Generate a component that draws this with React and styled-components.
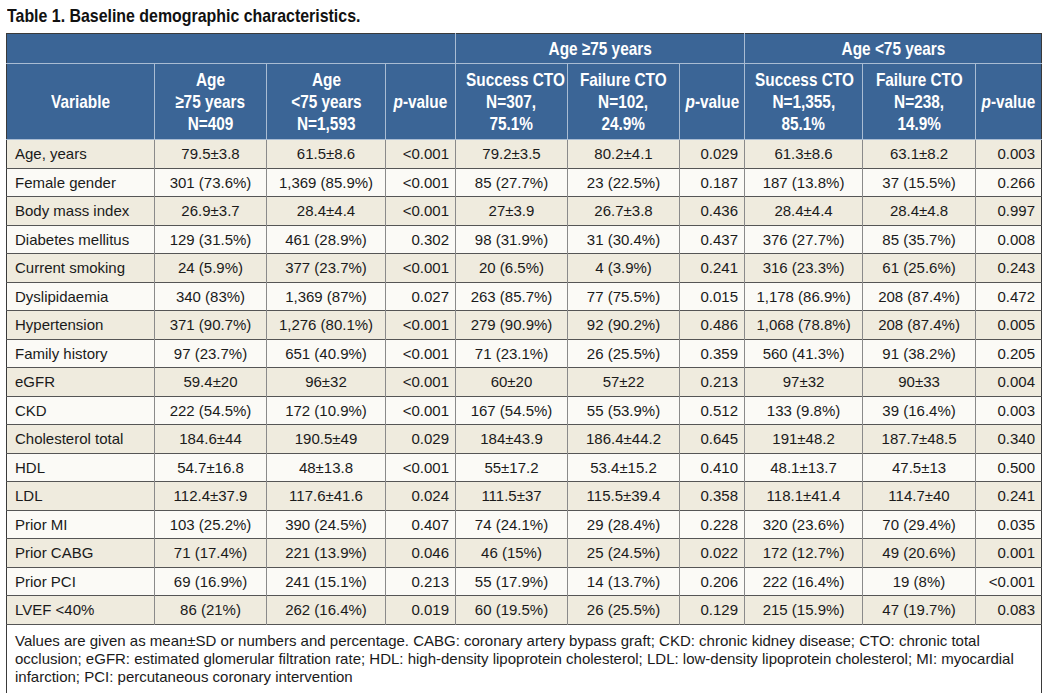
import React from "react";
import styled, { createGlobalStyle } from "styled-components";

const Global = createGlobalStyle`
  html, body { margin: 0; padding: 0; background: #ffffff; }
  body { font-family: "Liberation Sans", Arial, sans-serif; }
`;

const Page = styled.div`
  padding: 5px 0 0 6px;
  width: 1035px;
`;

const Title = styled.h1`
  margin: 0 0 6px 1px;
  font-family: "Liberation Sans", Arial, sans-serif;
  font-weight: 700;
  font-size: 18.5px;
  line-height: 22px;
  color: #111;
  white-space: nowrap;
`;

const Narrow = styled.span`
  display: inline-block;
  white-space: nowrap;
  transform: scaleX(${(p) => p.$s || 0.85});
  transform-origin: ${(p) => (p.$left ? "left center" : "center center")};
`;

const Table = styled.table`
  border-collapse: collapse;
  table-layout: fixed;
  width: 1035px;
  border: 1px solid #3a3a3a;
`;

const HeadCell = styled.th`
  background: #3b6596;
  color: #ffffff;
  font-family: "Liberation Sans", Arial, sans-serif;
  font-weight: 700;
  font-size: 18.5px;
  line-height: 22px;
  text-align: center;
  padding: 0;
  overflow: visible;
  border-left: 1px solid #a9bcd3;
  border-bottom: 1px solid #a9bcd3;
  &:first-child { border-left: none; }
  height: ${(p) => p.$h}px;
  em { font-style: italic; }
`;

const Row = styled.tr`
  background: ${(p) => (p.$alt ? "#fbfaf6" : "#efebde")};
  height: 28.5px;
`;

const Cell = styled.td`
  font-size: 15px;
  color: #1a1a1a;
  padding: 0 ${(p) => (p.$align === "right" ? "6px" : "2px")} 0 ${(p) => (p.$align === "left" ? "8px" : "2px")};
  text-align: ${(p) => p.$align || "center"};
  white-space: nowrap;
  border-top: 1px solid #555;
  border-left: 1px solid #8a8a8a;
  &:first-child { border-left: none; }
`;

const Foot = styled.td`
  background: #ffffff;
  font-size: 15px;
  line-height: 18px;
  color: #1a1a1a;
  padding: 7px 8px 8px 8px;
  border-top: 1px solid #555;
`;

const widths = [148, 112, 119, 70, 112, 112, 65, 118, 113, 66];

const rows = [
  ["Age, years", "79.5±3.8", "61.5±8.6", "<0.001", "79.2±3.5", "80.2±4.1", "0.029", "61.3±8.6", "63.1±8.2", "0.003"],
  ["Female gender", "301 (73.6%)", "1,369 (85.9%)", "<0.001", "85 (27.7%)", "23 (22.5%)", "0.187", "187 (13.8%)", "37 (15.5%)", "0.266"],
  ["Body mass index", "26.9±3.7", "28.4±4.4", "<0.001", "27±3.9", "26.7±3.8", "0.436", "28.4±4.4", "28.4±4.8", "0.997"],
  ["Diabetes mellitus", "129 (31.5%)", "461 (28.9%)", "0.302", "98 (31.9%)", "31 (30.4%)", "0.437", "376 (27.7%)", "85 (35.7%)", "0.008"],
  ["Current smoking", "24 (5.9%)", "377 (23.7%)", "<0.001", "20 (6.5%)", "4 (3.9%)", "0.241", "316 (23.3%)", "61 (25.6%)", "0.243"],
  ["Dyslipidaemia", "340 (83%)", "1,369 (87%)", "0.027", "263 (85.7%)", "77 (75.5%)", "0.015", "1,178 (86.9%)", "208 (87.4%)", "0.472"],
  ["Hypertension", "371 (90.7%)", "1,276 (80.1%)", "<0.001", "279 (90.9%)", "92 (90.2%)", "0.486", "1,068 (78.8%)", "208 (87.4%)", "0.005"],
  ["Family history", "97 (23.7%)", "651 (40.9%)", "<0.001", "71 (23.1%)", "26 (25.5%)", "0.359", "560 (41.3%)", "91 (38.2%)", "0.205"],
  ["eGFR", "59.4±20", "96±32", "<0.001", "60±20", "57±22", "0.213", "97±32", "90±33", "0.004"],
  ["CKD", "222 (54.5%)", "172 (10.9%)", "<0.001", "167 (54.5%)", "55 (53.9%)", "0.512", "133 (9.8%)", "39 (16.4%)", "0.003"],
  ["Cholesterol total", "184.6±44", "190.5±49", "0.029", "184±43.9", "186.4±44.2", "0.645", "191±48.2", "187.7±48.5", "0.340"],
  ["HDL", "54.7±16.8", "48±13.8", "<0.001", "55±17.2", "53.4±15.2", "0.410", "48.1±13.7", "47.5±13", "0.500"],
  ["LDL", "112.4±37.9", "117.6±41.6", "0.024", "111.5±37", "115.5±39.4", "0.358", "118.1±41.4", "114.7±40", "0.241"],
  ["Prior MI", "103 (25.2%)", "390 (24.5%)", "0.407", "74 (24.1%)", "29 (28.4%)", "0.228", "320 (23.6%)", "70 (29.4%)", "0.035"],
  ["Prior CABG", "71 (17.4%)", "221 (13.9%)", "0.046", "46 (15%)", "25 (24.5%)", "0.022", "172 (12.7%)", "49 (20.6%)", "0.001"],
  ["Prior PCI", "69 (16.9%)", "241 (15.1%)", "0.213", "55 (17.9%)", "14 (13.7%)", "0.206", "222 (16.4%)", "19 (8%)", "<0.001"],
  ["LVEF <40%", "86 (21%)", "262 (16.4%)", "0.019", "60 (19.5%)", "26 (25.5%)", "0.129", "215 (15.9%)", "47 (19.7%)", "0.083"],
];

const pCols = new Set([3, 6, 9]);

const H = ({ lines }) => (
  <>
    {lines.map((l, i) => (
      <React.Fragment key={i}>
        {i > 0 && <br />}
        <Narrow $s={0.83}>{l}</Narrow>
      </React.Fragment>
    ))}
  </>
);

const PVal = () => (
  <Narrow $s={0.83}>
    <em>p</em>-value
  </Narrow>
);

export default function App() {
  return (
    <Page>
      <Global />
      <Title>
        <Narrow $left $s={0.86}>Table 1. Baseline demographic characteristics.</Narrow>
      </Title>
      <Table>
        <colgroup>
          {widths.map((w, i) => (
            <col key={i} style={{ width: w }} />
          ))}
        </colgroup>
        <thead>
          <tr>
            <HeadCell colSpan={4} $h={29} />
            <HeadCell colSpan={3} $h={29}><H lines={["Age ≥75 years"]} /></HeadCell>
            <HeadCell colSpan={3} $h={29}><H lines={["Age <75 years"]} /></HeadCell>
          </tr>
          <tr>
            <HeadCell $h={75}><H lines={["Variable"]} /></HeadCell>
            <HeadCell $h={75}><H lines={["Age", "≥75 years", "N=409"]} /></HeadCell>
            <HeadCell $h={75}><H lines={["Age", "<75 years", "N=1,593"]} /></HeadCell>
            <HeadCell $h={75}><PVal /></HeadCell>
            <HeadCell $h={75}><H lines={["Success CTO", "N=307,", "75.1%"]} /></HeadCell>
            <HeadCell $h={75}><H lines={["Failure CTO", "N=102,", "24.9%"]} /></HeadCell>
            <HeadCell $h={75}><PVal /></HeadCell>
            <HeadCell $h={75}><H lines={["Success CTO", "N=1,355,", "85.1%"]} /></HeadCell>
            <HeadCell $h={75}><H lines={["Failure CTO", "N=238,", "14.9%"]} /></HeadCell>
            <HeadCell $h={75}><PVal /></HeadCell>
          </tr>
        </thead>
        <tbody>
          {rows.map((r, ri) => (
            <Row key={ri} $alt={ri % 2 === 1}>
              {r.map((c, ci) => (
                <Cell key={ci} $align={ci === 0 ? "left" : pCols.has(ci) ? "right" : "center"}>
                  {c}
                </Cell>
              ))}
            </Row>
          ))}
          <tr>
            <Foot colSpan={10}>
              Values are given as mean±SD or numbers and percentage. CABG: coronary artery bypass graft; CKD: chronic kidney disease; CTO: chronic total occlusion; eGFR: estimated glomerular filtration rate; HDL: high-density lipoprotein cholesterol; LDL: low-density lipoprotein cholesterol; MI: myocardial infarction; PCI: percutaneous coronary intervention
            </Foot>
          </tr>
        </tbody>
      </Table>
    </Page>
  );
}
